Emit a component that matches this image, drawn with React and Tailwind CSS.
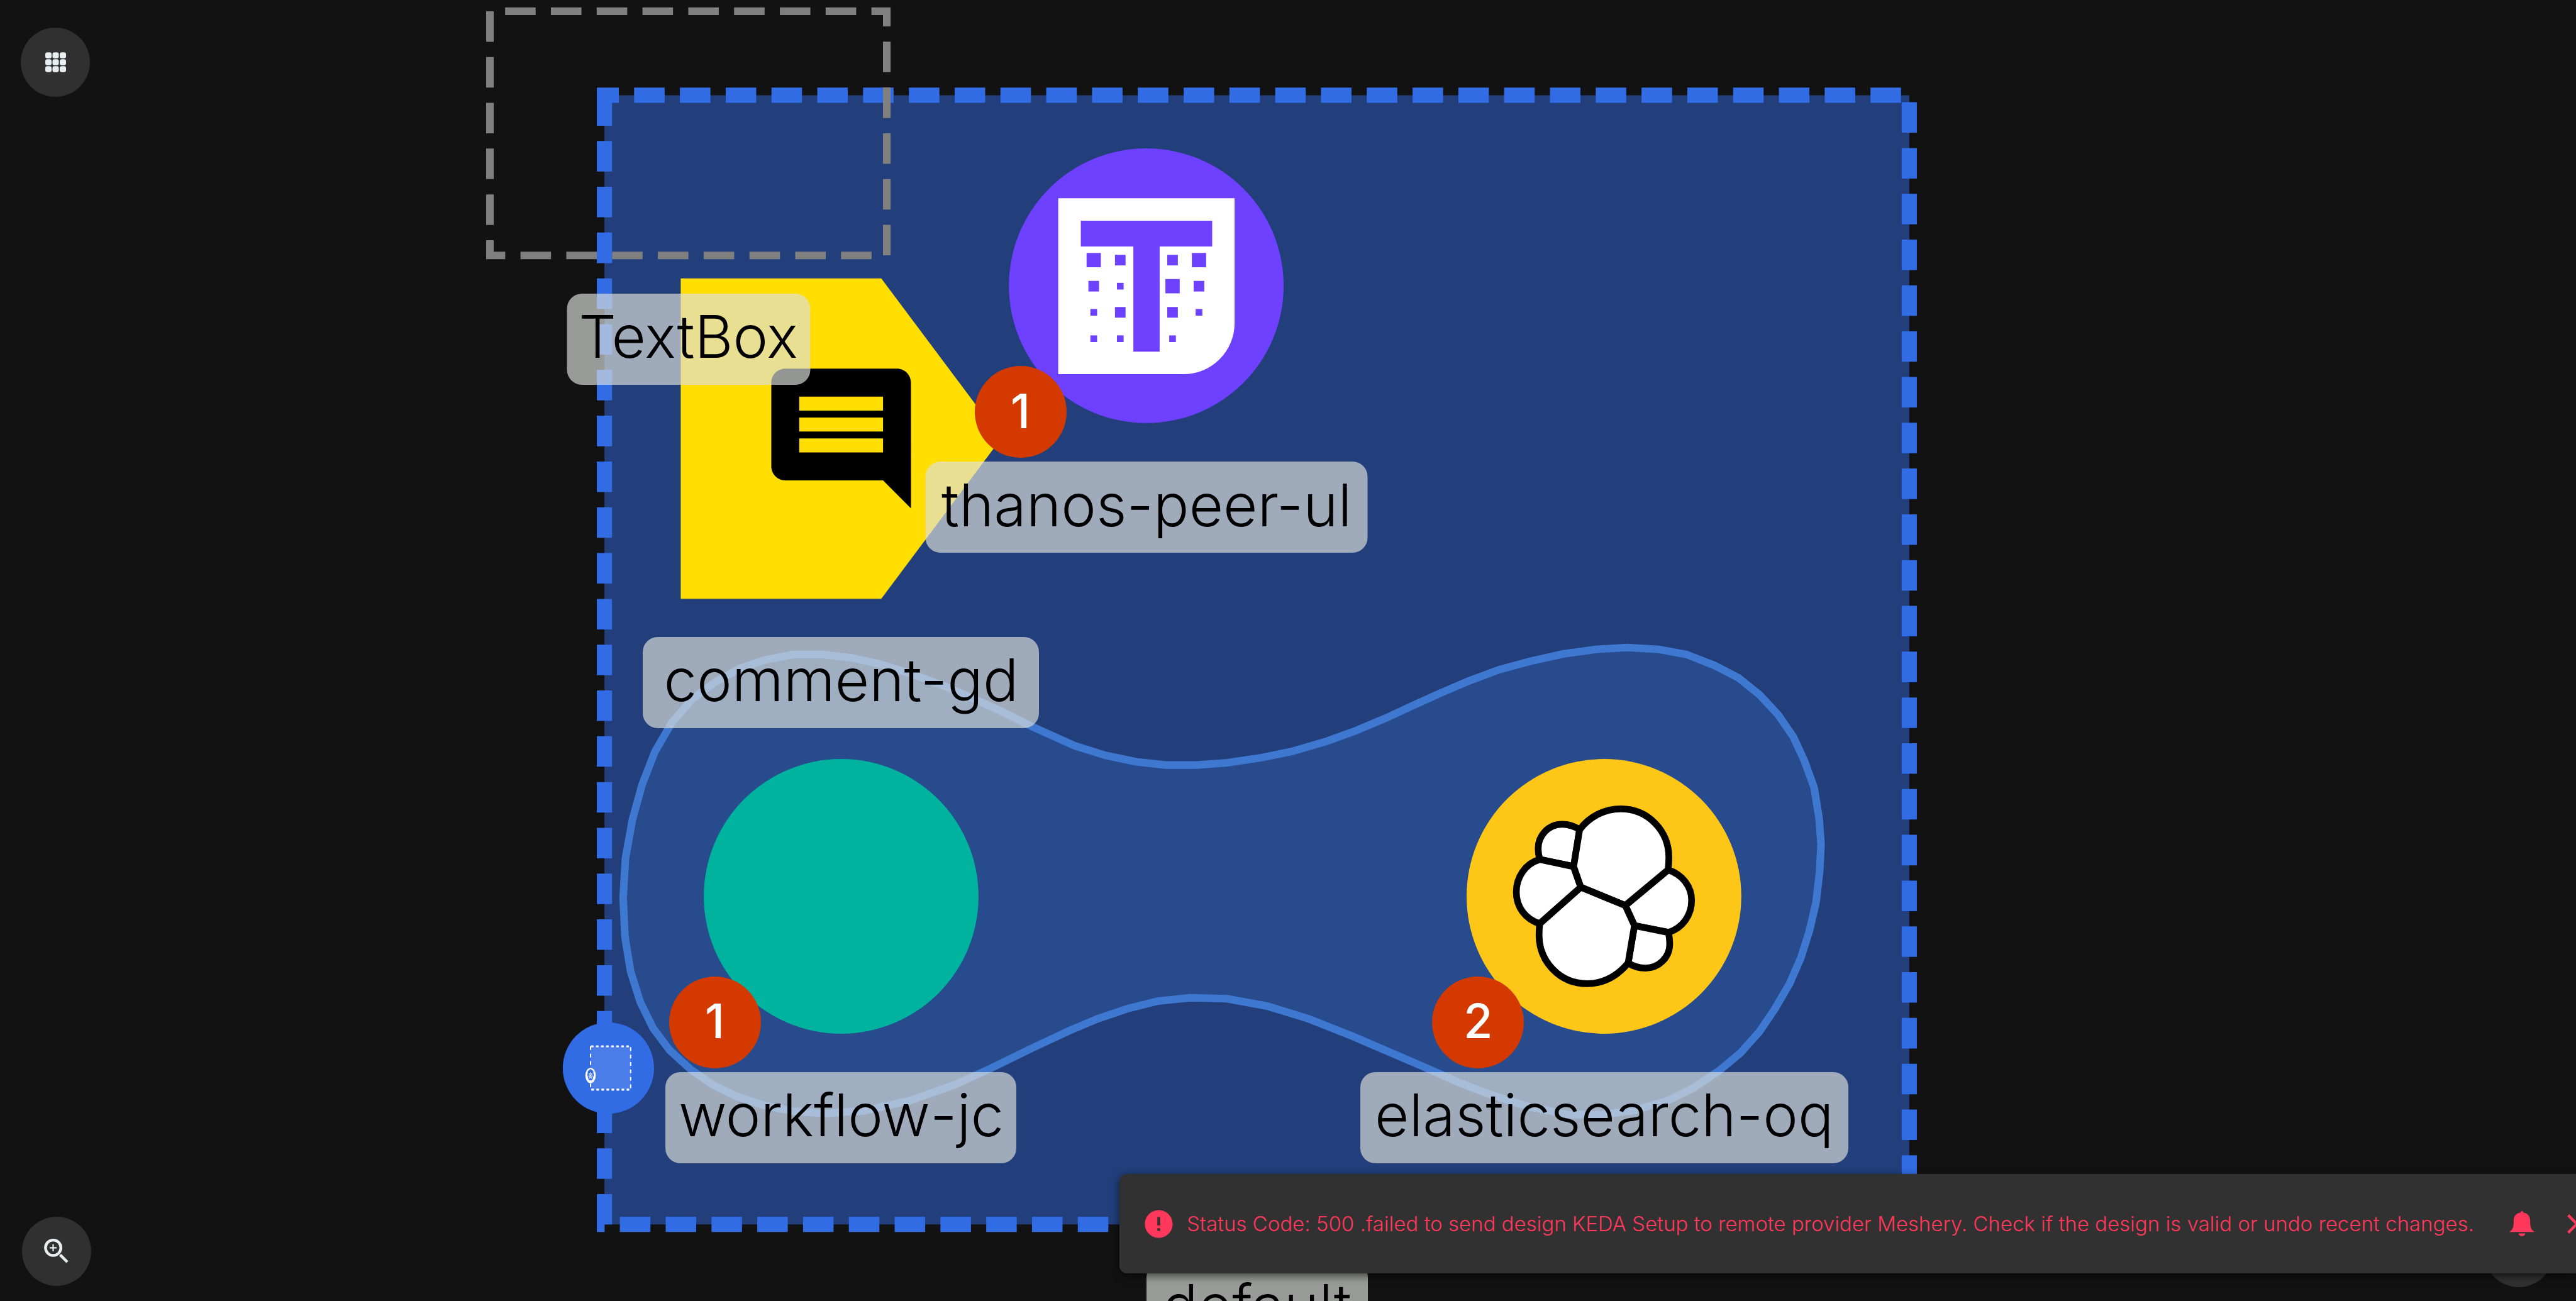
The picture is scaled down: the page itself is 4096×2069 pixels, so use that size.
const VIEW_W = 5589;
const VIEW_H = 2823;

const LABELS = [
  { text: 'TextBox', x: 1493.6, y: 637, box: 'w-[387px]' },
  { text: 'thanos-peer-ul', x: 2487.8, y: 1001.6, box: 'w-[703px]' },
  { text: 'comment-gd', x: 1825, y: 1382, box: 'w-[630px]' },
  { text: 'workflow-jc', x: 1825, y: 2326, box: 'w-[558px]' },
  { text: 'elasticsearch-oq', x: 3480.5, y: 2326, box: 'w-[776px]' },
  { text: 'default', x: 2727, y: 2739, box: 'w-[352px]' },
];

const BADGES = [
  { text: '1', x: 2214, y: 894 },
  { text: '1', x: 1551, y: 2218 },
  { text: '2', x: 3207, y: 2218 },
];

const RELATION_OUTLINE =
  '1352,1948 1357,1863 1372,1779 1393,1703 1421,1631 1457,1569 1501,1518 1552,1480 1606,1450 1659,1432 1722,1420 1785,1420 1845,1427 1906,1440 1974,1461 2047,1488 2119,1519 2178,1546 2240,1577 2331,1618 2398,1639 2465,1653 2529,1660 2596,1660 2663,1655 2737,1644 2805,1630 2880,1608 2943,1585 3007,1558 3061,1533 3123,1505 3186,1478 3253,1453 3320,1435 3391,1419 3462,1409 3531,1405 3599,1409 3659,1420 3720,1444 3772,1471 3818,1508 3858,1551 3891,1599 3915,1651 3936,1709 3947,1777 3951,1832 3948,1891 3940,1959 3926,2019 3907,2079 3883,2134 3851,2189 3817,2239 3776,2285 3730,2323 3672,2362 3614,2390 3543,2410 3471,2419 3400,2418 3320,2402 3239,2377 3168,2350 3087,2314 2989,2272 2931,2247 2837,2210 2749,2183 2662,2167 2583,2165 2513,2172 2449,2188 2383,2210 2319,2237 2240,2274 2150,2318 2071,2354 1974,2388 1877,2410 1792,2416 1719,2411 1659,2399 1598,2379 1547,2354 1499,2321 1453,2279 1417,2231 1389,2174 1368,2107 1356,2033';

const THANOS_DOTS = [
  [2373, 564.4, 31], [2430.6, 564.4, 23], [2544, 564.4, 23], [2601.4, 564.4, 31],
  [2373, 621, 23], [2430.6, 621, 14.5], [2544, 621, 31], [2601.4, 621, 23],
  [2373, 677.7, 14.5], [2430.6, 677.7, 23], [2544, 677.7, 23], [2601.4, 677.7, 14.5],
  [2373, 735, 14.5], [2430.6, 735, 14.5], [2544, 735, 14.5],
];

const SPOKES = [0, 1, 2, 3, 4, 5, 6].map((i) => (i * 2 * Math.PI) / 7 - Math.PI / 2);

function place(x, y) {
  return { left: `${(x / VIEW_W) * 100}%`, top: `${(y / VIEW_H) * 100}%` };
}

function ThanosNode() {
  return (
    <g>
      <circle cx="2487" cy="620" r="298" fill="#6d41ff" />
      <path d="M2296 430H2678.6V701A111 111 0 0 1 2567.6 812H2296Z" fill="#fff" />
      <g fill="#6d41ff">
        <path d="M2345 479H2630V535H2516V763H2459V535H2345Z" />
        {THANOS_DOTS.map(([x, y, s]) => (
          <rect key={`${x}-${y}`} x={x - s / 2} y={y - s / 2} width={s} height={s} />
        ))}
      </g>
    </g>
  );
}

function CommentNode() {
  return (
    <g>
      <path d="M1477 604H1912L2172 951.7L1912 1299.4H1477Z" fill="#ffde00" />
      <path
        transform="translate(1643.2 769.7) scale(15.15)"
        d="M21.99 4c0-1.1-.89-2-1.99-2H4c-1.1 0-2 .9-2 2v12c0 1.1.9 2 2 2h14l4 4-.01-18zM18 14H6v-2h12v2zm0-3H6V9h12v2zm0-3H6V6h12v2z"
      />
    </g>
  );
}

function ElasticNode() {
  return (
    <g>
      <circle cx="3480" cy="1945" r="298" fill="#fec617" />
      <g
        transform="translate(3180 1640) scale(.38265 .38903)"
        fill="#fff"
        stroke="#000"
        strokeWidth="38"
        strokeLinejoin="round"
      >
        <path d="M646 412C615 392 585 382 547 382C468 382 411 445 411 517Q411 548 420 578L612 618Z" />
        <path d="M420 578C338 602 287 676 287 760C287 843 338 911 420 936L653 733L612 618Z" />
        <path d="M1148 636C1230 662 1281 730 1281 806C1281 890 1230 960 1150 985L957 947L905 835Z" />
        <path d="M1150 985Q1157 1020 1157 1050C1157 1125 1095 1184 1020 1184C985 1184 950 1174 921 1156L957 947Z" />
        <path d="M646 412C700 340 786 296 880 296C1035 296 1152 420 1152 566Q1152 600 1148 636L905 835L653 733L612 618Z" />
        <path d="M921 1156C860 1228 780 1271 688 1271C533 1271 416 1146 416 1000Q416 968 420 936L653 733L905 835L957 947Z" />
      </g>
    </g>
  );
}

function NamespaceMarker() {
  return (
    <g>
      <circle cx="1320" cy="2317.6" r="99" fill="#326ce5" />
      <g transform="translate(1281.3 2270.3) scale(1 1.47)" fill="none" stroke="#fff" strokeWidth="2.8">
        <path d="M0 0V64H87V0Z" fill="#fff" fillOpacity=".12" strokeDasharray="5.5 5.45" />
        <circle cx="0" cy="43.1" r="11.3" fill="#fff" stroke="none" />
        <path d="M0 33.6L5.7 36.4L7.1 42.8L3.4 50.2H-3.4L-7.1 42.8L-5.7 36.4Z" fill="#326ce5" stroke="none" />
        <circle cx="0" cy="43.2" r="3.4" strokeWidth=".9" />
        {SPOKES.map((a) => (
          <path key={a} strokeWidth=".8" d={`M0 43.2L${5.2 * Math.cos(a)} ${43.2 + 5.2 * Math.sin(a)}`} />
        ))}
      </g>
    </g>
  );
}

function Diagram() {
  return (
    <svg
      className="absolute inset-0 h-full w-full"
      viewBox={`0 0 ${VIEW_W} ${VIEW_H}`}
      preserveAspectRatio="none"
      aria-hidden="true"
    >
      <path
        d="M1311.4 206.6V2656.8H4142.4V206.6Z"
        fill="#223f7b"
        stroke="#326ce5"
        strokeWidth="33"
        strokeDasharray="66.23 33.12"
      />
      <polygon points={RELATION_OUTLINE} fill="#274b8c" stroke="#3e78d0" strokeWidth="16.5" />
      <path
        d="M1063 24.4V554.2H1924V24.4Z"
        fill="none"
        stroke="#808080"
        strokeWidth="16.5"
        strokeDasharray="66.23 33.12"
      />
      <CommentNode />
      <ThanosNode />
      <circle cx="1825" cy="1945" r="298" fill="#00b39f" />
      <ElasticNode />
      <NamespaceMarker />
    </svg>
  );
}

function RoundButton({ label, className, children }) {
  return (
    <button
      type="button"
      aria-label={label}
      className={`absolute flex size-[110px] items-center justify-center rounded-full bg-[#303030] ${className}`}
    >
      {children}
    </button>
  );
}

function GridIcon() {
  return (
    <svg viewBox="87 90 135 129" className="h-8 w-[33px]" fill="#e8eff3">
      {[90, 135, 180].map((y) =>
        [87, 134, 181].map((x) => <rect key={`${x}-${y}`} x={x} y={y} width="41" height="39" rx="13" />)
      )}
    </svg>
  );
}

function ZoomIcon() {
  return (
    <svg viewBox="288 384 162 162" className="size-10" fill="none" stroke="#e8eff3">
      <circle cx="347" cy="442" r="49.5" strokeWidth="18" />
      <path d="M324 442H369M346.500 419V465" strokeWidth="9" />
      <path d="M392 488L438 534" strokeWidth="18" />
    </svg>
  );
}

function ErrorIcon() {
  return (
    <svg viewBox="0 0 24 24" className="size-[53px] shrink-0" fill="currentColor" aria-hidden="true">
      <path d="M12 2C6.48 2 2 6.48 2 12s4.480 10 10 10 10-4.480 10-10S17.520 2 12 2zm1 15h-2v-2h2v2zm0-4h-2V7h2v6z" />
    </svg>
  );
}

function BellIcon() {
  return (
    <svg viewBox="169 84 160 162" className="size-10" fill="currentColor">
      <path d="M249 84C254 84 258 88 259 94C285 97 302 118 302 145C302 185 305 203 329 217V219H169V217C193 203 196 185 196 145C196 118 213 97 239 94C240 88 244 84 249 84Z" />
      <path d="M228 228H270C270 239 260 246 249 246C238 246 228 239 228 228Z" />
    </svg>
  );
}

function CloseIcon() {
  return (
    <svg viewBox="0 0 24 24" className="size-[53px]" fill="currentColor">
      <path d="M19 6.410L17.590 5 12 10.590 6.410 5 5 6.410 10.590 12 5 17.590 6.410 19 12 13.410 17.590 19 19 17.590 13.410 12z" />
    </svg>
  );
}

function Toast() {
  return (
    <div
      role="alert"
      className="absolute right-0 bottom-11 left-[1780px] flex h-[158px] items-center overflow-hidden rounded-l-xl bg-[#313131] pl-9 whitespace-nowrap text-[#ff385c] shadow-[0_4px_14px_rgba(0,0,0,0.6)]"
    >
      <ErrorIcon />
      <p className="ml-[18px] w-[2060px] shrink-0 text-[33px] leading-[52px] font-light">
        Status Code: 500 .failed to send design KEDA Setup to remote provider Meshery. Check if the design is valid or
        undo recent changes.
      </p>
      <button type="button" aria-label="Notifications" className="ml-[43px] shrink-0">
        <BellIcon />
      </button>
      <button type="button" aria-label="Close" className="ml-[41px] shrink-0">
        <CloseIcon />
      </button>
    </div>
  );
}

export default function App() {
  return (
    <main className="relative h-screen w-full overflow-hidden bg-[#121212] font-['Inter','Noto_Sans',sans-serif]">
      <Diagram />
      {LABELS.map(({ text, x, y, box }) => (
        <div
          key={text}
          style={place(x, y)}
          className={`absolute flex h-[145px] -translate-x-1/2 items-center justify-center rounded-3xl bg-[#dcdfdb]/67 pb-2 text-[94px] leading-none font-light whitespace-nowrap text-black ${box}`}
        >
          {text}
        </div>
      ))}
      {BADGES.map(({ text, x, y }) => (
        <div
          key={`${x}-${y}`}
          style={place(x, y)}
          className="absolute flex size-[146px] -translate-x-1/2 -translate-y-1/2 items-center justify-center rounded-full bg-[#d43900] pb-1 text-[75px] leading-none font-medium text-white"
        >
          {text}
        </div>
      ))}
      <RoundButton label="Open menu" className="top-11 left-[33px]">
        <GridIcon />
      </RoundButton>
      <RoundButton label="Zoom" className="bottom-6 left-[35px]">
        <ZoomIcon />
      </RoundButton>
      <RoundButton label="Help" className="right-9 bottom-[22px]" />
      <Toast />
    </main>
  );
}
